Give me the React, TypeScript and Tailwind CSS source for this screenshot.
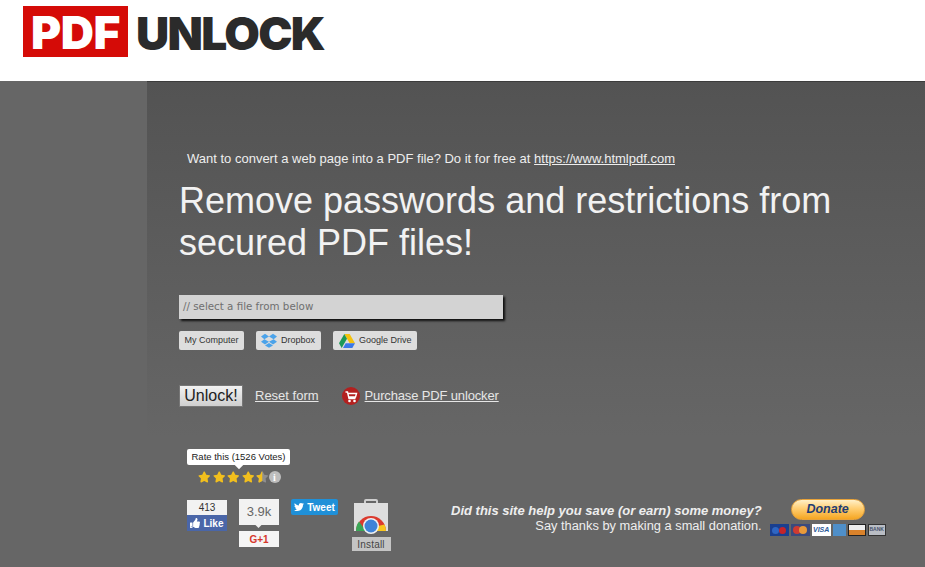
import { FaStar, FaStarHalf, FaThumbsUp, FaTwitter } from 'react-icons/fa';

function DropboxIcon() {
  return (
    <svg viewBox="0 0 24 22" className="h-[15px] w-[16px]">
      <path fill="#4ba3ea" d="M6 1L0 5l5 4-5 4 6 4 6-4 6 4 6-4-5-4 5-4-6-4-6 4zM12 5l7 4-7 4-7-4z" />
      <path fill="#4ba3ea" d="M6 18.500l6-3.800 6 3.800-6 3.500z" />
    </svg>
  );
}

function DriveIcon() {
  return (
    <svg viewBox="0 0 24 21" className="h-[14px] w-[16px]">
      <path fill="#f4c20d" d="M8 0h8l8 14h-8z" />
      <path fill="#1c9957" d="M8 0l4 7-8 14-4-7z" />
      <path fill="#3b78e7" d="M6 21l4-7h14l-4 7z" />
    </svg>
  );
}

function CartIcon() {
  return (
    <svg viewBox="0 0 18 18" className="h-[18px] w-[18px]">
      <circle cx="9" cy="9" r="9" fill="#b3201f" />
      <path d="M3.500 5h2l1.500 6.500h6.500M6 6.500h8.500l-1 3.500H6.800" fill="none" stroke="#fff" strokeWidth="1.400" />
      <circle cx="7.500" cy="14" r="1.300" fill="#fff" />
      <circle cx="12.500" cy="14" r="1.300" fill="#fff" />
    </svg>
  );
}

function ChromeStoreIcon() {
  return (
    <svg viewBox="0 0 34 36" className="h-[36px] w-[34px]">
      <path d="M11 4V2a1 1 0 011-1h10a1 1 0 011 1v2" fill="none" stroke="#cfcfcf" strokeWidth="2" />
      <rect x="0" y="4" width="34" height="28" fill="#dedede" />
      <path d="M2 32a15 15 0 0130 0z" fill="#db3a2e" />
      <path d="M2 32a15 15 0 013-9.500L12 32z" fill="#3aa757" />
      <path d="M32 32H21l3-5 6.500-1.500A15 15 0 0132 32z" fill="#f7c51e" />
      <circle cx="17" cy="27" r="8" fill="#f1f1f1" />
      <circle cx="17" cy="27" r="6.500" fill="#3f83d8" />
    </svg>
  );
}

function Stars() {
  return (
    <div className="flex items-center gap-[2px] pl-[11px] pt-[6px]">
      {[0, 1, 2, 3].map((i) => (
        <FaStar key={i} className="h-[12px] w-[12.500px] text-[#f2bf1d]" />
      ))}
      <span className="relative h-[12px] w-[12.500px]">
        <FaStar className="absolute inset-0 h-[12px] w-[12.500px] text-[#8f8f8f]" />
        <FaStarHalf className="absolute inset-0 h-[12px] w-[12.500px] text-[#f2bf1d]" />
      </span>
      <span className="ml-[-2px] flex h-[12px] w-[12px] items-center justify-center rounded-full bg-[#bdbdbd] font-['Liberation_Serif',serif] text-[10px] font-bold text-white">
        i
      </span>
    </div>
  );
}

function Cards() {
  return (
    <div className="flex gap-[2px]">
      <div className="flex h-[12px] w-[19px] items-center justify-center bg-[#1a3f8f]">
        <span className="h-[7px] w-[7px] rounded-full bg-[#2f66c2]" />
        <span className="h-[7px] w-[7px] rounded-full bg-[#c4242a]" />
      </div>
      <div className="flex h-[12px] w-[19px] items-center justify-center bg-[#3a4a7d]">
        <span className="h-[8px] w-[8px] rounded-full bg-[#cf3a32]" />
        <span className="ml-[-2px] h-[8px] w-[8px] rounded-full bg-[#e89a3a]" />
      </div>
      <div className="flex h-[12px] w-[19px] items-center justify-center bg-white text-[7px] font-bold italic text-[#2a5a9a]">
        VISA
      </div>
      <div className="h-[12px] w-[13px] bg-[#4f8fc9]" />
      <div className="h-[12px] w-[18px] border border-[#222] bg-[linear-gradient(to_bottom,#eee_50%,#d9822b_50%)]" />
      <div className="flex h-[12px] w-[18px] items-center justify-center border border-[#333] bg-[#b9bdc4] text-[5px] font-bold text-[#44506a]">
        BANK
      </div>
    </div>
  );
}

export default function App() {
  return (
    <div className="flex h-[567px] flex-col overflow-hidden bg-white font-['Liberation_Sans',sans-serif]">
      <header className="h-[81px] shrink-0 pl-[23px] pt-[6px]">
        <div className="flex items-start gap-[8px] font-['Inter',sans-serif] font-black">
          <div className="flex h-[51px] w-[105px] items-center justify-center bg-[#d50b07] text-[46px] leading-none tracking-[-0.5px] text-white">
            PDF
          </div>
          <div className="h-[51px] text-[46px] leading-[54px] tracking-[-1.700px] text-[#2b2b2b]">UNLOCK</div>
        </div>
      </header>

      <div className="flex flex-1 bg-[#666]">
        <div className="w-[147px] shrink-0 bg-[#666]" />
        <main className="flex-1 border-t border-[#3c3c3c] bg-[linear-gradient(to_bottom,#535353_0px,#666_355px)] pl-[32px] text-white">
          <p className="pl-[8px] pt-[69px] text-[13px] leading-[15px] text-[#eee]">
            Want to convert a web page into a PDF file? Do it for free at{' '}
            <a className="underline">https://www.htmlpdf.com</a>
          </p>

          <h1 className="mt-[14px] w-[680px] text-[36px] leading-[42px] text-[#f2f2f2]">
            Remove passwords and restrictions from secured PDF files!
          </h1>

          <div className="mt-[31px] flex h-[24px] w-[324px] items-center bg-[#d3d3d3] pl-[4px] font-['DejaVu_Sans',sans-serif] text-[10.300px] text-[#6f6f6f] shadow-[2px_2px_2px_#111]">
            // select a file from below
          </div>

          <div className="mt-[12px] flex gap-[12px] text-[#333]">
            <button className="flex h-[19px] w-[65px] items-center justify-center rounded-[2px] bg-[#ddd] text-[9px]">
              My Computer
            </button>
            <button className="flex h-[19px] w-[65px] items-center gap-[4px] rounded-[2px] bg-[#ddd] pl-[5px] text-[9px]">
              <DropboxIcon />
              Dropbox
            </button>
            <button className="flex h-[19px] w-[84px] items-center gap-[4px] rounded-[2px] bg-[#ddd] pl-[6px] text-[9px]">
              <DriveIcon />
              Google Drive
            </button>
          </div>

          <div className="mt-[35px] flex items-center text-[13px] text-[#e6e6e6]">
            <button className="h-[22px] w-[64px] border border-[#777] bg-[linear-gradient(to_bottom,#f2f2f2,#cfcfcf)] text-[16px] leading-[20px] text-[#222]">
              Unlock!
            </button>
            <a className="ml-[12px] underline">Reset form</a>
            <span className="ml-[23px]">
              <CartIcon />
            </span>
            <a className="ml-[5px] tracking-[-0.15px] underline">Purchase PDF unlocker</a>
          </div>

          <div className="mt-[42px] pl-[8px]">
            <div className="relative flex h-[16px] w-[103px] items-center justify-center rounded-[2px] bg-white text-[9.500px] text-[#222]">
              Rate this (1526 Votes)
              <span className="absolute bottom-[-3px] left-[49px] h-[6px] w-[6px] rotate-45 bg-white" />
            </div>
            <Stars />
          </div>

          <div className="mt-[16px] flex items-start pl-[8px]">
            <div className="w-[40px] pt-[1px]">
              <div className="flex h-[15px] items-center justify-center bg-[#f2f2f2] text-[10px] text-[#333]">413</div>
              <div className="flex h-[16px] items-center justify-center gap-[3px] bg-[#4a66a8] text-[10px] font-bold text-white">
                <FaThumbsUp className="h-[10px] w-[10px]" />
                Like
              </div>
            </div>

            <div className="ml-[12px] w-[40px]">
              <div className="relative flex h-[26px] items-center justify-center bg-[#f2f2f2] text-[13px] text-[#666]">
                3.9k
                <span className="absolute bottom-[-2px] left-[17px] h-[5px] w-[5px] rotate-45 bg-[#f2f2f2]" />
              </div>
              <div className="mt-[6px] flex h-[16px] items-center justify-center bg-[#f5f5f5] text-[10px] font-bold text-[#d6382c]">
                G+1
              </div>
            </div>

            <div className="ml-[12px] flex h-[16px] w-[47px] items-center justify-center gap-[3px] rounded-[2px] bg-[#1f90d8] text-[10px] font-bold text-white">
              <FaTwitter className="h-[10px] w-[10px]" />
              Tweet
            </div>

            <div className="ml-[13px] flex w-[40px] flex-col items-center">
              <ChromeStoreIcon />
              <div className="mt-[2px] flex h-[14px] w-[39px] items-center justify-center bg-[#c4c4c4] text-[10px] tracking-[0.2px] text-[#444]">
                Install
              </div>
            </div>

            <div className="ml-[60px] pt-[4px] text-right text-[13px] leading-[15px] text-[#eee]">
              <div className="font-bold italic">Did this site help you save (or earn) some money?</div>
              <div className="text-[12.850px]">Say thanks by making a small donation.</div>
            </div>

            <div className="ml-[8px] flex flex-col items-center">
              <div className="flex h-[21px] w-[74px] items-center justify-center rounded-full border border-[#e8a33a] bg-[linear-gradient(to_bottom,#fff0c8_0%,#ffce72_45%,#f5a623_100%)] text-[12.500px] font-bold italic text-[#1f3d73]">
                Donate
              </div>
              <div className="mt-[4px]">
                <Cards />
              </div>
            </div>
          </div>
        </main>
      </div>
    </div>
  );
}
